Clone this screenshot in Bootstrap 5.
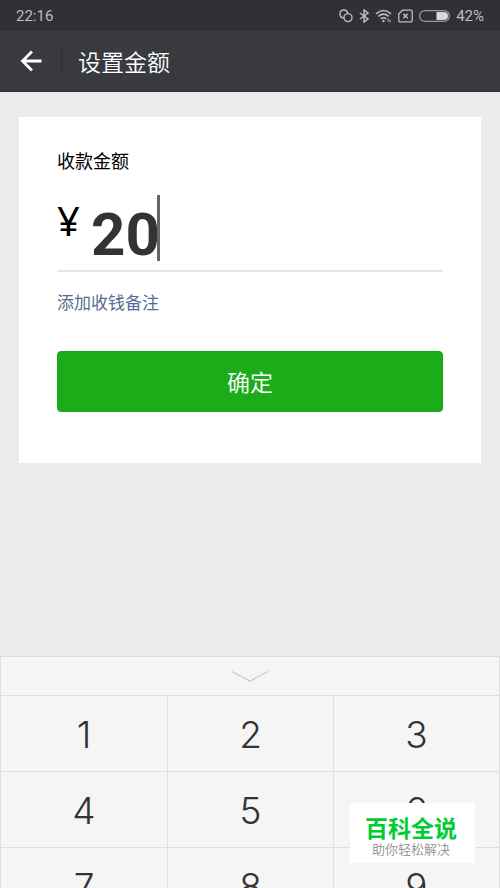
<!DOCTYPE html>
<html lang="zh-CN">
<head>
<meta charset="utf-8">
<meta name="viewport" content="width=device-width, initial-scale=1">
<title>设置金额</title>
<link href="https://cdn.jsdelivr.net/npm/bootstrap@5.3.0/dist/css/bootstrap.min.css" rel="stylesheet">
<style>
body { font-family: "Noto Sans CJK SC", sans-serif; background: #ececec; color: #000; }
.status-bar { height: 31px; padding: 0 16px; background: #303135; color: #bdbdbf; font: 15px/32px Roboto, sans-serif; }
.status-icons { gap: 6px; }
.title-bar { height: 61px; padding: 0 20px; background: #393a3f; border-bottom: 1px solid #2e2f33; }
.title-bar h1 { font-size: 23px; line-height: 32px; font-weight: 350; color: #fff; padding-left: 16px; }
.title-rule { width: 1px; height: 30px; background: #2f3034; margin-left: 19px; }
.pay-card { margin: 25px 19px 0; padding: 30px 38px 51px; background: #fff; }
.pay-label { font-size: 18px; line-height: 26px; }
.amount-row { height: 68px; margin-top: 22px; }
.yen { font: 40px/52px "Noto Sans", sans-serif; width: 34px; }
.amount-input { width: 66px; height: 68px; border: 0; padding: 10px 0 0; outline: 0; background: none; color: #333; font: 700 60px/58px Roboto, sans-serif; }
.caret { width: 3px; height: 66px; background: #666; }
.amount-rule { height: 2px; background: #e6e6e6; margin-top: 7px; }
.note-link { font-size: 17px; line-height: 24px; color: #576b95; margin-top: 18px; }
.btn-pay { --bs-btn-bg: #1aad19; --bs-btn-border-color: #1aa31a; --bs-btn-color: #fff; --bs-btn-hover-bg: #179b16; --bs-btn-hover-color: #fff; height: 61px; margin-top: 37px; padding: 0; font-size: 23px; font-weight: 350; border-radius: 4px; }
.keypad { height: 232px; background: #f5f5f5; border: 1px solid #dcdcdc; border-bottom: 0; }
.key-hide { height: 38px; border: 0; background: none; padding: 0; }
.key { height: 76px; border: 0 solid #dfdfdf; border-top-width: 1px; border-left-width: 1px; background: none; padding: 3px 0 0; color: #333; font: 350 37px/72px Inter, sans-serif; }
.col:first-child > .key { border-left-width: 0; }
.brand-tag { right: 25px; bottom: 25px; width: 125px; height: 60px; padding: 10px 3px 0 0; background: #fff; }
.brand-name { font-size: 23px; line-height: 29px; font-weight: 700; color: #0c3; }
.brand-line { font-size: 13px; line-height: 14px; color: #999; }
</style>
<script src="https://cdn.jsdelivr.net/npm/bootstrap@5.3.0/dist/js/bootstrap.bundle.min.js"></script>
</head>
<body>
<div class="vh-100 d-flex flex-column overflow-hidden position-relative">
  <div class="status-bar d-flex justify-content-between flex-shrink-0">
    <span>22:16</span>
    <div class="status-icons d-flex align-items-center">
      <svg width="14" height="14" viewBox="0 0 14 14" fill="none" stroke="#bdbdbf" stroke-width="1.400"><path d="M4.600 9A4 4 0 1 1 8.800 4"/><circle cx="9" cy="8.600" r="4"/></svg>
      <svg width="10" height="14" viewBox="0 0 10 14" fill="none" stroke="#bdbdbf" stroke-width="1.500"><path d="M1 4l8 6-4 3V1l4 3-8 6"/></svg>
      <svg width="17" height="14" viewBox="0 0 17 14" fill="none" stroke="#bdbdbf" stroke-width="1.600"><path d="M1 4.800Q8.500-1.800 16 4.800M3.300 7.400Q8.500 3 13.700 7.400M5.700 9.800Q8.500 7.600 11.300 9.800"/><circle cx="8.500" cy="12" r="1.200" fill="#bdbdbf" stroke="none"/><path d="M13 9.500v3M15 10.500v3" stroke-width="1"/></svg>
      <svg width="15" height="14" viewBox="0 0 15 14" fill="none" stroke="#bdbdbf" stroke-width="1.300"><path d="M4.500 1.200H13a1.200 1.200 0 0 1 1.200 1.200v9.200a1.200 1.200 0 0 1-1.200 1.200H2a1.200 1.200 0 0 1-1.200-1.200V4.800z"/><path d="M5.300 4.800l4.400 4.400M9.700 4.800L5.300 9.200" stroke-width="1.600"/></svg>
      <svg width="31" height="12" viewBox="0 0 31 12"><rect x=".7" y=".7" width="29.600" height="10.600" rx="5" fill="none" stroke="#9a9a9c" stroke-width="1.300"/><path d="M17.500 2H25a4 4 0 0 1 0 8h-7.500z" fill="#d8d8d8"/></svg>
      <span>42%</span>
    </div>
  </div>
  <header class="title-bar d-flex align-items-center flex-shrink-0">
    <button type="button" class="btn p-0 border-0 d-flex" aria-label="返回">
      <svg width="22" height="22" viewBox="0 0 22 22" fill="none" stroke="#fff" stroke-width="2.800"><path d="M21.500 11H3M12 1.500L2.500 11l9.500 9.500"/></svg>
    </button>
    <span class="title-rule"></span>
    <h1 class="mb-0">设置金额</h1>
  </header>
  <main class="flex-grow-1">
    <form class="pay-card">
      <label class="pay-label d-block" for="amount">收款金额</label>
      <div class="amount-row d-flex align-items-start">
        <span class="yen">¥</span>
        <input class="amount-input" id="amount" type="text" inputmode="decimal" value="20">
        <span class="caret"></span>
      </div>
      <div class="amount-rule"></div>
      <a href="#" class="note-link d-block text-decoration-none">添加收钱备注</a>
      <button type="button" class="btn btn-pay w-100">确定</button>
    </form>
  </main>
  <section class="keypad flex-shrink-0 overflow-hidden" aria-label="数字键盘">
    <button type="button" class="key-hide w-100 d-flex align-items-center justify-content-center" aria-label="收起键盘">
      <svg width="38" height="12" viewBox="0 0 38 12" fill="none" stroke="#c8c8c8" stroke-width="1.200"><path d="M1 1.500L19 11 37 1.500"/></svg>
    </button>
    <div class="row row-cols-3 g-0">
      <div class="col"><button type="button" class="key w-100">1</button></div>
      <div class="col"><button type="button" class="key w-100">2</button></div>
      <div class="col"><button type="button" class="key w-100">3</button></div>
    </div>
    <div class="row row-cols-3 g-0">
      <div class="col"><button type="button" class="key w-100">4</button></div>
      <div class="col"><button type="button" class="key w-100">5</button></div>
      <div class="col"><button type="button" class="key w-100">6</button></div>
    </div>
    <div class="row row-cols-3 g-0">
      <div class="col"><button type="button" class="key w-100">7</button></div>
      <div class="col"><button type="button" class="key w-100">8</button></div>
      <div class="col"><button type="button" class="key w-100">9</button></div>
    </div>
  </section>
  <aside class="brand-tag position-absolute text-center">
    <div class="brand-name">百科全说</div>
    <div class="brand-line">助你轻松解决</div>
  </aside>
</div>
</body>
</html>
